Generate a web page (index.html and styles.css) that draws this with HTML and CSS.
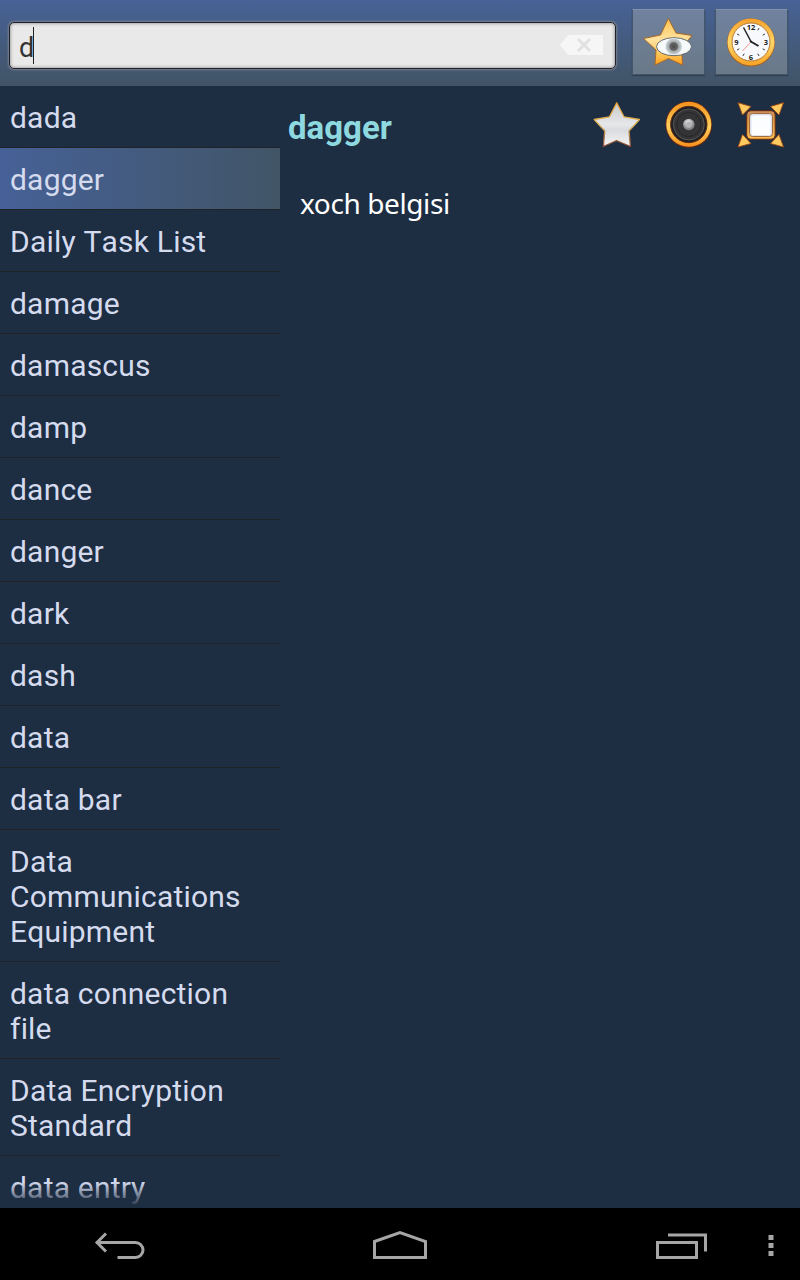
FILE: index.html
```
<!DOCTYPE html>
<html lang="en">

<head>
    <meta charset="utf-8">
    <title>Dictionary</title>
    <link rel="stylesheet" href="styles.css">
</head>

<body>

    <header class="toolbar">
        <div class="search">
            <span class="query">d</span>
            <svg class="clear" width="44" height="22" viewBox="0 0 44 22">
                <path d="M0 11 8 1H43V21H8z" fill="#f6f6f6" />
                <path d="M18 5 30 17M30 5 18 17" stroke="#e0e0e0" stroke-width="2.6" />
            </svg>
        </div>
        <button class="tool">
            <svg width="72" height="66" viewBox="0 0 72 66">
                <defs>
                    <linearGradient id="gold" x1="0" y1="0" x2="0" y2="1">
                        <stop offset="0" stop-color="#ffc24c" />
                        <stop offset=".45" stop-color="#ffe2a0" />
                        <stop offset=".75" stop-color="#ffc75c" />
                        <stop offset="1" stop-color="#ffa01c" />
                    </linearGradient>
                    <radialGradient id="eye">
                        <stop offset="0" stop-color="#4c4c4c" />
                        <stop offset=".42" stop-color="#666" />
                        <stop offset=".56" stop-color="#a9adae" />
                        <stop offset=".85" stop-color="#c3cfd1" />
                        <stop offset="1" stop-color="#fff" stop-opacity="0" />
                    </radialGradient>
                </defs>
                <path d="M36.300 9.500 44 24 60 26.500 49.500 39 50.500 56 36.500 49.500 23 56 24 41 11.500 29.500 28.500 26z" fill="url(#gold)" stroke="#a8692a" stroke-width="1" stroke-linejoin="round" />
                <ellipse cx="42" cy="37.700" rx="17.500" ry="9" fill="#f6fafb" stroke="#555b60" stroke-width=".9" />
                <circle cx="41.700" cy="37.500" r="9" fill="url(#eye)" />
            </svg>
        </button>
        <button class="tool">
            <svg width="72" height="66" viewBox="0 0 72 66">
                <defs>
                    <linearGradient id="brass" x1="0" y1="0" x2="0" y2="1">
                        <stop offset="0" stop-color="#f5a12a" />
                        <stop offset=".5" stop-color="#ffd668" />
                        <stop offset="1" stop-color="#f7a325" />
                    </linearGradient>
                </defs>
                <circle cx="36" cy="33.500" r="24" fill="#a86020" />
                <circle cx="36" cy="33" r="23.500" fill="url(#brass)" />
                <circle cx="36" cy="33" r="19" fill="#f8f9fc" stroke="#b57a35" />
                <g stroke="#333" stroke-width="1">
                    <path d="M44 19.100 42.800 21.300M49.900 25 47.700 26.200M49.900 41 47.700 39.800M44 46.900 42.800 44.700M28 46.900 29.200 44.700M22.100 41 24.300 39.800M22.100 25 24.300 26.200" />
                </g>
                <g class="numbers">
                    <text x="36" y="20.500">12</text>
                    <text x="51" y="35.500">3</text>
                    <text x="36" y="50.500">6</text>
                    <text x="21.500" y="35.500">9</text>
                </g>
                <path d="M35.500 33.500 27.500 42" stroke="#ee8a80" stroke-width=".9" />
                <path d="M36.500 33.500 28.500 18.500" stroke="#222" stroke-width="1.500" />
                <path d="M35 32 43.500 37" stroke="#222" stroke-width="1.900" />
            </svg>
        </button>
    </header>

    <main class="content">
        <ul class="words">
            <li>dada</li>
            <li class="selected">dagger</li>
            <li>Daily Task List</li>
            <li>damage</li>
            <li>damascus</li>
            <li>damp</li>
            <li>dance</li>
            <li>danger</li>
            <li>dark</li>
            <li>dash</li>
            <li>data</li>
            <li>data bar</li>
            <li>Data Communications Equipment</li>
            <li>data connection file</li>
            <li>Data Encryption Standard</li>
            <li>data entry</li>
        </ul>

        <article class="entry">
            <div class="entry-head">
                <h1>dagger</h1>
                <div class="actions">
                    <!-- favourite -->
                    <svg width="48" height="48" viewBox="0 0 48 48">
                        <defs>
                            <linearGradient id="silver" x1="0" y1="0" x2="0" y2="1">
                                <stop offset="0" stop-color="#c8cacc" />
                                <stop offset=".5" stop-color="#e6e7e9" />
                                <stop offset=".62" stop-color="#dadbde" />
                                <stop offset="1" stop-color="#f4f4f4" />
                            </linearGradient>
                            <linearGradient id="rim" x1="0" y1="0" x2="0" y2="1">
                                <stop offset="0" stop-color="#e89c2c" />
                                <stop offset=".5" stop-color="#d9b45a" />
                                <stop offset="1" stop-color="#8a4a34" />
                            </linearGradient>
                        </defs>
                        <path d="M23.700 1.800 31 15.800 46.500 18.500 36 30 37.500 45.500 23.500 39.500 10.300 45.500 11.800 30 1.200 18.500 16.500 15.800z" fill="url(#silver)" stroke="url(#rim)" stroke-width="1.300" stroke-linejoin="round" />
                    </svg>
                    <!-- listen -->
                    <svg width="48" height="48" viewBox="0 0 48 48">
                        <defs>
                            <linearGradient id="ring" x1="0" y1="0" x2="0" y2="1">
                                <stop offset="0" stop-color="#f5901c" />
                                <stop offset=".55" stop-color="#ffd05c" />
                                <stop offset="1" stop-color="#f7901e" />
                            </linearGradient>
                            <radialGradient id="cap" cx=".45" cy=".35">
                                <stop offset="0" stop-color="#fff" />
                                <stop offset="1" stop-color="#858585" />
                            </radialGradient>
                        </defs>
                        <circle cx="23.800" cy="23.500" r="23.300" fill="#702a10" />
                        <circle cx="23.800" cy="23.300" r="22.500" fill="url(#ring)" />
                        <circle cx="23.800" cy="23.500" r="18.200" fill="#202022" stroke="#5d2d16" />
                        <circle cx="23.800" cy="23.500" r="15.500" fill="#343436" stroke="#606060" stroke-width=".8" />
                        <circle cx="23.800" cy="23.500" r="12" fill="none" stroke="#262628" stroke-width="1" />
                        <circle cx="23.800" cy="23.500" r="5.800" fill="url(#cap)" />
                        <circle cx="23.800" cy="23.800" r="3" fill="#b4b4b6" />
                    </svg>
                    <!-- full screen -->
                    <svg width="48" height="48" viewBox="0 0 48 48">
                        <defs>
                            <linearGradient id="frame" x1="0" y1="0" x2="0" y2="1">
                                <stop offset="0" stop-color="#c98f5c" />
                                <stop offset=".4" stop-color="#e3a04c" />
                                <stop offset="1" stop-color="#ffc052" />
                            </linearGradient>
                        </defs>
                        <g fill="#ffcb60" stroke="#9d4a14" stroke-width=".9" stroke-linejoin="round">
                            <path d="M1 1.700 14 5.500 5.500 14z" />
                            <path d="M46.500 1.700 33.500 5.500 42 14z" />
                            <path d="M1 46 5.500 33.500 14 42.500z" />
                            <path d="M46.500 46 42 33.500 33.500 42.500z" />
                        </g>
                        <rect x="9.700" y="9.700" width="28.500" height="28.500" rx="4" fill="url(#frame)" stroke="#64280f" />
                        <rect x="12.500" y="12.500" width="23" height="23" rx="3" fill="#dfe2ea" stroke="#a56a40" />
                        <rect x="14.500" y="14.500" width="19" height="19.500" rx="2" fill="#fcfdff" />
                    </svg>
                </div>
            </div>
            <p>xoch belgisi</p>
        </article>
    </main>

    <nav class="navbar">
        <svg class="back" width="52" height="28" viewBox="0 0 52 28">
            <path d="M2 10.500H41.500a7.500 7.500 0 0 1 0 15H23.500M12 1.500 3 10.500 12 19.500" />
        </svg>
        <svg class="home" width="56" height="30" viewBox="0 0 56 30">
            <path d="M2.500 11.500 28 2.500 53.500 11.500V27.500H2.500z" />
        </svg>
        <svg class="recent" width="52" height="28" viewBox="0 0 52 28">
            <path d="M1.500 10.500H40.500V25.500H1.500zM12 3H49.500V19.500" />
        </svg>
        <svg class="more" width="6" height="22" viewBox="0 0 6 22">
            <path d="M3 0V5M3 8V13M3 16V21" />
        </svg>
    </nav>

</body>

</html>
```
FILE: styles.css
```
* {
    box-sizing: border-box;
}

body {
    display: flex;
    flex-direction: column;
    width: 800px;
    height: 1280px;
    margin: 0;
    overflow: hidden;
    background-color: #1d2d42;
    font-family: Roboto, sans-serif;
}

svg {
    display: block;
}

.toolbar {
    display: flex;
    align-items: flex-start;
    height: 86px;
    padding: 9px 12px 0 9px;
    background: linear-gradient(#476296, #415466);
}

.search {
    display: flex;
    align-items: center;
    justify-content: space-between;
    width: 607px;
    height: 47px;
    margin-top: 13px;
    margin-right: 16px;
    padding: 0 11px 0 9px;
    border: 1px solid #1d2230;
    border-radius: 5px;
    background-color: #e9e9e9;
    box-shadow: 0 0 2px 1px #7b808a, inset 0 0 3px 1px #a9a5a5;
}

.query {
    height: 37px;
    border-right: 1px solid #222;
    color: #333;
    font-size: 27px;
    letter-spacing: -1px;
    line-height: 42px;
}

.clear {
    margin-bottom: 1px;
}

.tool {
    display: flex;
    width: 73px;
    height: 66px;
    margin-right: 10px;
    padding: 0;
    border: 1px solid #44566c;
    border-top-color: #8492a8;
    background: linear-gradient(#70829f, #6a7988);
    box-shadow: 0 1px 1px #303e50;
}

.tool:last-child {
    margin-right: 0;
}

.tool svg {
    flex: none;
    margin: -1px;
}

.numbers {
    fill: #222;
    font-family: "Open Sans", sans-serif;
    font-size: 7.5px;
    font-weight: bold;
    text-anchor: middle;
}

.content {
    display: flex;
    height: 1122px;
    overflow: hidden;
}

.words {
    position: relative;
    width: 280px;
    margin: 0;
    padding: 0;
    overflow: hidden;
    list-style-type: none;
    color: #d5dbee;
    font-size: 30px;
    font-kerning: none;
    letter-spacing: 0.2px;
    line-height: 35px;
}

/* fade at the bottom of the list */
.words::after {
    content: "";
    position: absolute;
    left: 0;
    right: 0;
    bottom: 0;
    height: 26px;
    background: linear-gradient(rgba(29, 45, 66, 0), #1d2d42);
}

.words li {
    padding: 14px 10px 12px;
    border-bottom: 1px solid #1f2328;
}

.words .selected {
    background: linear-gradient(to right, #466197, #415567) padding-box;
}

.entry {
    flex: 1;
    padding: 15px 15px 0 8px;
}

.entry-head {
    display: flex;
    justify-content: space-between;
}

.entry h1 {
    margin: 7px 0 0;
    color: #8dd9df;
    font-size: 33px;
    line-height: 40px;
}

.actions {
    display: flex;
    gap: 24px;
}

.entry p {
    margin: 34px 0 0 12px;
    color: #fff;
    font-family: "Noto Sans", sans-serif;
    font-size: 28px;
    letter-spacing: -0.4px;
    line-height: 40px;
}

.navbar {
    display: flex;
    align-items: flex-start;
    height: 72px;
    padding-left: 94px;
    background-color: #000;
}

.navbar path {
    fill: none;
    stroke: #a6a6a6;
    stroke-width: 3;
}

.back {
    margin-top: 24px;
}

.home {
    margin: 22px 0 0 226px;
}

.recent {
    margin: 24px 0 0 228px;
}

.more {
    margin: 27px 0 0 60px;
}

.navbar .more path {
    stroke-width: 5;
}
```
